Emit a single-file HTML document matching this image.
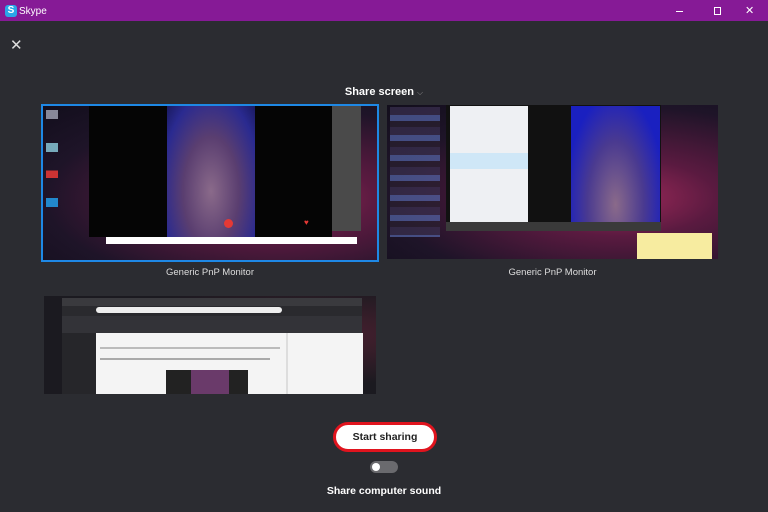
<!DOCTYPE html>
<html><head><meta charset="utf-8"><style>
*{margin:0;padding:0;box-sizing:border-box}
body{width:768px;height:512px;background:#2b2c31;font-family:"Liberation Sans",sans-serif;position:relative;overflow:hidden;color:#fff}
.a{position:absolute}
.space{background:radial-gradient(ellipse at 70% 60%,#a02a5a 0%,#5a1a40 30%,#1e1428 70%,#120e1c 100%)}
</style></head><body>
<div class="a" style="left:0;top:0;width:768px;height:21px;background:#861a96"></div>
<div class="a" style="left:5px;top:5px;width:12px;height:12px;border-radius:3px;background:#2aa6e8;font-size:10px;font-weight:bold;text-align:center;line-height:12px">S</div>
<div class="a" style="left:19px;top:6px;font-size:10px">Skype</div>
<div class="a" style="left:676px;top:11px;width:7px;height:1px;background:#fff"></div>
<div class="a" style="left:714px;top:7px;width:7px;height:8px;border:1px solid #fff"></div>
<div class="a" style="left:745px;top:4px;font-size:11px">✕</div>
<div class="a" style="left:10px;top:36px;font-size:15px;color:#ddd">✕</div>
<div class="a" style="left:0;width:768px;top:86px;text-align:center;font-size:11px;font-weight:bold">Share screen <span style="font-weight:normal;color:#888;font-size:8px">⌵</span></div>

<!-- thumb1 -->
<div class="a space" style="left:41px;top:104px;width:338px;height:158px;border:2px solid #1e88e5"></div>
<div class="a" style="left:89px;top:106px;width:243px;height:131px;background:#050505"></div>
<div class="a" style="left:167px;top:106px;width:88px;height:131px;background:radial-gradient(ellipse at 50% 65%,#8a6a8a 0%,#5a3e70 45%,#2a2a90 80%,#1a1a60 100%)"></div>
<div class="a" style="left:106px;top:237px;width:251px;height:7px;background:#fff"></div>
<div class="a" style="left:332px;top:106px;width:29px;height:125px;background:#4a4a4a"></div>
<div class="a" style="left:224px;top:219px;width:9px;height:9px;border-radius:50%;background:#e53935"></div>
<div class="a" style="left:304px;top:218px;width:7px;height:7px;color:#e53935;font-size:8px">♥</div>
<div class="a" style="left:46px;top:110px;width:12px;height:110px;background:linear-gradient(#889 0 8%,transparent 8% 30%,#7ab 30% 38%,transparent 38% 55%,#c33 55% 62%,transparent 62% 80%,#28c 80% 88%,transparent 88%)"></div>
<div class="a" style="left:41px;top:267px;width:338px;text-align:center;font-size:9.5px;color:#ddd">Generic PnP Monitor</div>

<!-- thumb2 -->
<div class="a space" style="left:387px;top:105px;width:331px;height:154px"></div>
<div class="a" style="left:390px;top:107px;width:50px;height:130px;background:repeating-linear-gradient(#3a3050 0 8px,#5566aa 8px 14px,#2a2030 14px 20px);opacity:.7"></div>
<div class="a" style="left:446px;top:105px;width:215px;height:126px;background:#111"></div>
<div class="a" style="left:450px;top:106px;width:78px;height:116px;background:#eef0f3"></div>
<div class="a" style="left:450px;top:153px;width:78px;height:16px;background:#cfe7f7"></div>
<div class="a" style="left:571px;top:106px;width:89px;height:116px;background:radial-gradient(ellipse at 50% 85%,#8a6a8a 0%,#4a3a90 45%,#1a20c0 80%)"></div>
<div class="a" style="left:446px;top:222px;width:215px;height:9px;background:#3a3a3a"></div>
<div class="a" style="left:637px;top:233px;width:75px;height:26px;background:#f7eca0"></div>
<div class="a" style="left:387px;top:267px;width:331px;text-align:center;font-size:9.5px;color:#ddd">Generic PnP Monitor</div>

<!-- thumb3 -->
<div class="a space" style="left:44px;top:296px;width:332px;height:98px;background:radial-gradient(ellipse at 80% 40%,#4a2030 0%,#1b1a20 60%)"></div>
<div class="a" style="left:62px;top:298px;width:300px;height:8px;background:#3a3a3e"></div>
<div class="a" style="left:62px;top:306px;width:300px;height:10px;background:#2a2a2e"></div>
<div class="a" style="left:96px;top:307px;width:186px;height:6px;background:#eee;border-radius:3px"></div>
<div class="a" style="left:62px;top:316px;width:300px;height:17px;background:#333338"></div>
<div class="a" style="left:62px;top:333px;width:34px;height:61px;background:#26262a"></div>
<div class="a" style="left:96px;top:333px;width:267px;height:61px;background:#f4f4f4"></div>
<div class="a" style="left:100px;top:347px;width:180px;height:2px;background:#bbb"></div>
<div class="a" style="left:100px;top:358px;width:170px;height:2px;background:#aaa"></div>
<div class="a" style="left:286px;top:333px;width:2px;height:61px;background:#ddd"></div>
<div class="a" style="left:166px;top:370px;width:82px;height:24px;background:#222"></div>
<div class="a" style="left:191px;top:370px;width:38px;height:24px;background:#6a3a6a"></div>

<!-- button -->
<div class="a" style="left:333px;top:422px;width:104px;height:30px;border-radius:15px;background:#fff;border:3px solid #e0141e;color:#222;font-size:10.5px;font-weight:bold;text-align:center;line-height:24px">Start sharing</div>
<div class="a" style="left:370px;top:461px;width:28px;height:12px;border-radius:6px;background:#6a6a6e"></div>
<div class="a" style="left:372px;top:463px;width:8px;height:8px;border-radius:50%;background:#fff"></div>
<div class="a" style="left:0;width:768px;top:485px;text-align:center;font-size:10.5px;font-weight:bold">Share computer sound</div>
</body></html>
